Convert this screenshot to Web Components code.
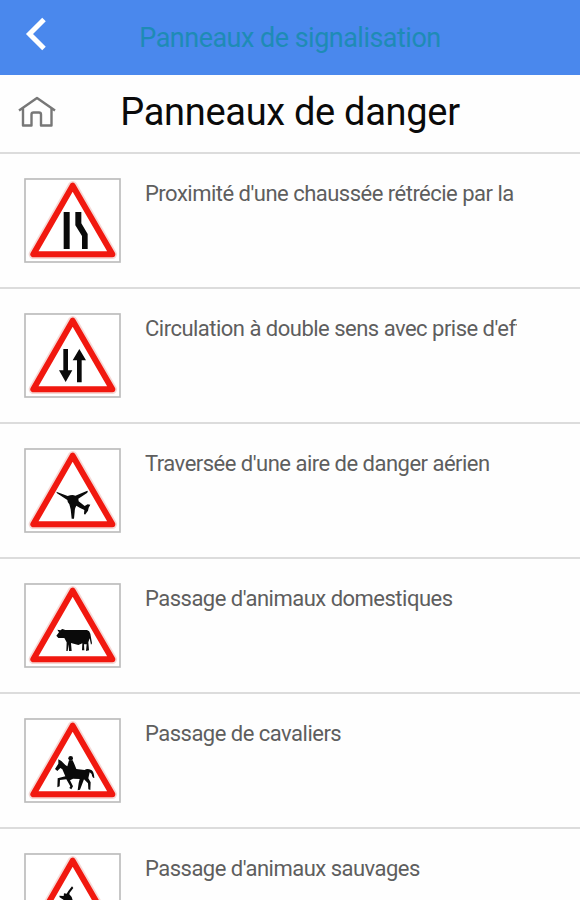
<!DOCTYPE html>
<html lang="fr">
<head>
<meta charset="utf-8">
<title>Panneaux de danger</title>
<style>
    html, body { margin: 0; height: 100%; overflow: hidden; background: #fefefe; font-family: Roboto, sans-serif; }
</style>
</head>
<body>
<sign-app></sign-app>

<script>
// Pictogrammes noirs, dans le repere 291x255 du panneau
const PICTOS = {
    narrow: `
        <path d="M146 126h18v111h-18z"/>
        <path d="M181 126h18v34l19 32v45h-17v-39l-20-32z"/>`,
    twoway: `
        <path d="M145 132h14v64h13l-20 35-20-35h13z"/>
        <path d="M186 232v-66h-13l20-34 20 34h-13v66z"/>`,
    plane: `
        <path d="M124 155L158 168Q172 163 181 167L217 152Q220 155 216 159L190 176L191 184L209 198L218 193L226 194L221 203L219 212L210 224L207 221L208 210L194 203L184 197Q179 205 179 216L177 236H170L167 208L163 193Q157 187 157 180L126 160Z"/>`,
    cow: `
        <path d="M124 182L132 172L127 164L136 166L142 162L151 165L216 165Q224 167 226 176L231 205L228 209L224 190L220 202L222 226L213 228L215 208L207 208L208 226L201 226L202 205L190 210L168 204L170 228H162L161 208L158 228H154L155 202L148 189L130 189Z"/>`,
    rider: `
        <circle cx="167" cy="145" r="7"/>
        <path d="M130 148L139 153L151 165L157 169L162 151L173 151L178 162L184 177L209 180Q216 174 229 180Q237 185 238 204Q232 205 230 192L224 187L220 205L227 217L226 240L220 238L219 220L207 208L203 218L195 239L188 241L191 219L194 207L174 206L165 211L174 229L169 238L163 234L166 229L154 208L135 210L134 229L127 232L128 205L151 199L142 178L136 174L127 183L120 177L130 161Z"/>`,
    deer: `
        <path d="M171 124L175 129L164 143L163 148L170 156L175 172L196 178L220 197L206 192L187 202L164 195L133 207L154 188L148 166L134 157L133 152L146 153L147 145L155 146L160 138Z"/>`
};

const SIGNS = [
    ['narrow', "Proximité d'une chaussée rétrécie par la"],
    ['twoway', "Circulation à double sens avec prise d'effet"],
    ['plane', "Traversée d'une aire de danger aérien"],
    ['cow', "Passage d'animaux domestiques"],
    ['rider', 'Passage de cavaliers'],
    ['deer', "Passage d'animaux sauvages"]
];

class AppBar extends HTMLElement {
    constructor() {
        super();
        this.attachShadow({ mode: 'open' });
        this.shadowRoot.innerHTML = `
            <style>
                :host { display: grid; grid-template-columns: 80px 1fr 80px; align-items: center; height: 75px; background: #4a88ed; }
                svg { display: block; margin: 0 0 7px 24px; }
                h1 { margin: 0; text-align: center; white-space: nowrap; font-size: 27px; line-height: 32px; letter-spacing: -0.52px; font-weight: 400; color: #1e8bb5; }
            </style>
            <svg width="26" height="34" viewBox="0 0 26 34"><path d="M20 2.500L5.500 17l14.500 14.500" fill="none" stroke="#fff" stroke-width="5"/></svg>
            <h1><slot></slot></h1>
        `;
    }
}
customElements.define('app-bar', AppBar);

class SectionHead extends HTMLElement {
    constructor() {
        super();
        this.attachShadow({ mode: 'open' });
        this.shadowRoot.innerHTML = `
            <style>
                :host { display: grid; grid-template-columns: 80px 1fr 80px; align-items: center; box-sizing: border-box; height: 79px; border-bottom: 2px solid #dcdcdc; background: #fefefe; }
                svg { display: block; margin: -4px 0 0 18px; }
                h2 { margin: -4px 0 0; text-align: center; white-space: nowrap; font-size: 38px; line-height: 46px; letter-spacing: -0.3px; font-weight: 400; color: #0a0a0a; }
            </style>
            <svg width="38" height="32" viewBox="0 0 38 32" fill="none" stroke="#777" stroke-width="2.4" stroke-linejoin="round">
                <path d="M1 14.500L19 2l18 12.500M5 12.500V29.500h8.500V18.500q0-2 2-2h5.500q2 0 2 2v11h10.500V12.500"/>
            </svg>
            <h2><slot></slot></h2>
        `;
    }
}
customElements.define('section-head', SectionHead);

class DangerSign extends HTMLElement {
    constructor() {
        super();
        this.attachShadow({ mode: 'open' });
    }

    connectedCallback() {
        this.shadowRoot.innerHTML = `
            <style>
                :host { display: block; width: 97px; height: 85px; }
                svg { display: block; }
            </style>
            <svg width="97" height="85" viewBox="27 24 291 255">
                <rect x="30" y="27" width="285" height="249" fill="#fff" stroke="#bcbcbc" stroke-width="5"/>
                <path d="M173 47L55 253H292Z" fill="#fff" stroke="#f6d9d6" stroke-width="28" stroke-linejoin="round"/>
                <path d="M173 47L55 253H292Z" fill="#fff" stroke="#f1180f" stroke-width="18" stroke-linejoin="round"/>
                <g fill="#0a0a0a">${PICTOS[this.getAttribute('kind')] || ''}</g>
            </svg>
        `;
    }
}
customElements.define('danger-sign', DangerSign);

class SignRow extends HTMLElement {
    constructor() {
        super();
        this.attachShadow({ mode: 'open' });
        this.shadowRoot.innerHTML = `
            <style>
                :host { display: flex; gap: 24px; align-items: flex-start; box-sizing: border-box; height: 135.1px; padding: 24px 63px 0 24px; border-bottom: 2px solid #dcdcdc; }
                ::slotted(danger-sign) { flex: none; }
                .label { flex: 1; min-width: 0; overflow: hidden; white-space: nowrap; font-size: 22px; line-height: 32px; letter-spacing: -0.51px; color: #5e5e5e; }
            </style>
            <slot name="sign"></slot>
            <div class="label"><slot></slot></div>
        `;
    }
}
customElements.define('sign-row', SignRow);

class SignApp extends HTMLElement {
    constructor() {
        super();
        this.attachShadow({ mode: 'open' });
        this.shadowRoot.innerHTML = `
            <style>
                :host { display: block; height: 100vh; overflow: hidden; }
            </style>
            <app-bar>Panneaux de signalisation</app-bar>
            <section-head>Panneaux de danger</section-head>
            ${SIGNS.map(([kind, text]) => `<sign-row><danger-sign slot="sign" kind="${kind}"></danger-sign>${text}</sign-row>`).join('')}
        `;
    }
}
customElements.define('sign-app', SignApp);
</script>
</body>
</html>
